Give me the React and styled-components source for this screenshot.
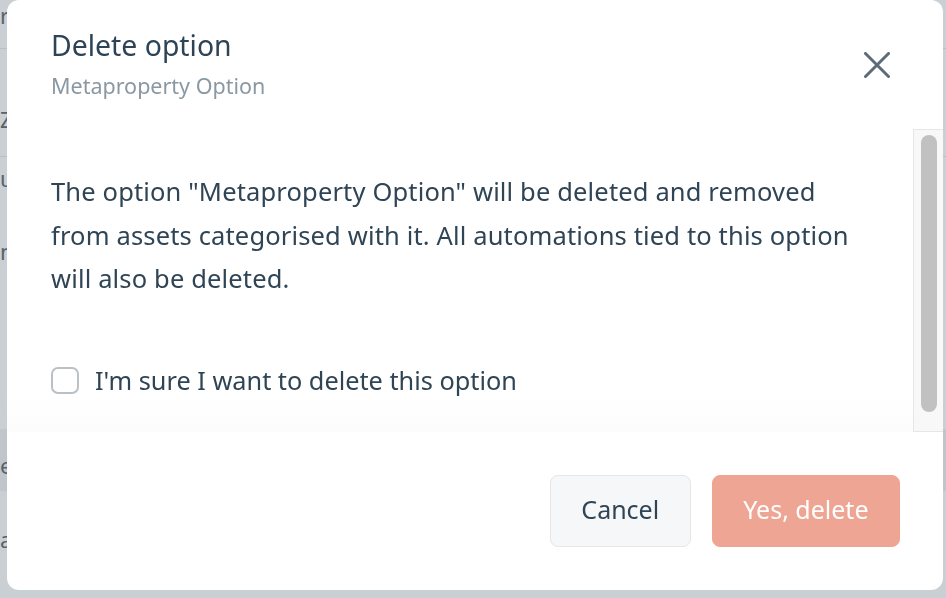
import React, { useState } from "react";
import styled, { createGlobalStyle } from "styled-components";

const GlobalStyle = createGlobalStyle`
  html, body {
    margin: 0;
    padding: 0;
    height: 100%;
    overflow: hidden;
    font-family: "Noto Sans", "Open Sans", sans-serif;
  }
`;

// page content that peeks out from behind the modal on the left
const backdropRows = [
  { text: "r", height: 49, top: 4, lined: true },
  { text: "Z", height: 108, top: 59, lined: true },
  { text: "u", height: 50, top: 10 },
  { text: "n", height: 222, top: 33 },
  { text: "e", height: 62, top: 25, dark: true },
  { text: "a", height: 106, top: 37 },
];

function App() {
  const [sure, setSure] = useState(false);

  return (
    <>
      <GlobalStyle />
      <Backdrop>
        {backdropRows.map((row, idx) => (
          <BackdropRow
            key={idx}
            $height={row.height}
            $top={row.top}
            $dark={row.dark}
            $lined={row.lined}
          >
            {row.text}
          </BackdropRow>
        ))}
      </Backdrop>

      <Dialog role="dialog" aria-labelledby="delete-title">
        <Header>
          <div>
            <Title id="delete-title">Delete option</Title>
            <Subtitle>Metaproperty Option</Subtitle>
          </div>
          <CloseButton aria-label="Close">
            <svg width="26" height="26" viewBox="0 0 26 26" fill="none">
              <path
                d="M1.5 1.5 24.5 24.5M24.5 1.5 1.5 24.5"
                stroke="#5c6b77"
                strokeWidth="3"
                strokeLinecap="round"
              />
            </svg>
          </CloseButton>
        </Header>

        <Body>
          <BodyContent>
            <Message>
              The option "Metaproperty Option" will be deleted and removed from
              assets categorised with it. All automations tied to this option
              will also be deleted.
            </Message>
            <CheckRow>
              <CheckBox
                type="checkbox"
                checked={sure}
                onChange={(e) => setSure(e.target.checked)}
              />
              I'm sure I want to delete this option
            </CheckRow>
          </BodyContent>
          <ScrollTrack>
            <ScrollThumb />
          </ScrollTrack>
        </Body>

        <Footer>
          <Button>Cancel</Button>
          <Button $danger disabled={!sure}>
            Yes, delete
          </Button>
        </Footer>
      </Dialog>
    </>
  );
}

export default App;

const Backdrop = styled.div`
  height: 100vh;
  background: #c9cfd3;
  display: flex;
  flex-direction: column;
  overflow: hidden;
`;

const BackdropRow = styled.div`
  flex: 0 0 ${(p) => p.$height}px;
  box-sizing: border-box;
  padding-top: ${(p) => p.$top}px;
  font-size: 22px;
  line-height: 22px;
  color: #56636d;
  background: ${(p) => (p.$dark ? "#bfc5ca" : "transparent")};
  border-bottom: ${(p) => (p.$lined ? "1px solid #b7bec4" : "none")};
`;

const Dialog = styled.div`
  position: fixed;
  top: 0;
  left: 7px;
  width: 936px;
  height: 590px;
  background: #ffffff;
  border-radius: 12px;
  display: flex;
  flex-direction: column;
  overflow: hidden;
  color: #2f4454;
`;

const Header = styled.div`
  flex: 0 0 129px;
  box-sizing: border-box;
  display: flex;
  justify-content: space-between;
  align-items: flex-start;
  padding: 25px 44px 0 44px;
`;

const Title = styled.h2`
  margin: 0;
  font-size: 28.4px;
  font-weight: 400;
  line-height: 40px;
  color: #2e4456;
`;

const Subtitle = styled.div`
  margin-top: 7px;
  font-size: 21.5px;
  line-height: 28px;
  color: #8a98a3;
`;

const CloseButton = styled.button`
  margin-top: 27px;
  margin-right: 9px;
  padding: 0;
  border: none;
  background: none;
  display: flex;
  cursor: pointer;
`;

const Body = styled.div`
  flex: 0 0 303px;
  display: flex;
  background: linear-gradient(
    to bottom,
    #ffffff 0%,
    #ffffff 88%,
    #fcfcfc 100%
  );
`;

const BodyContent = styled.div`
  flex: 1;
  overflow: hidden;
  padding: 41px 52px 0 44px;
`;

const ScrollTrack = styled.div`
  flex: 0 0 30px;
  box-sizing: border-box;
  display: flex;
  background: #f8f8f8;
  border: 1px solid #e6e6e6;
  border-right: none;
  padding: 5px 6px 19px 7px;
`;

const ScrollThumb = styled.div`
  flex: 1;
  background: #c1c1c1;
  border-radius: 8px;
`;

const Message = styled.p`
  margin: 0;
  font-size: 25.5px;
  letter-spacing: 0.15px;
  line-height: 43.5px;
`;

const CheckRow = styled.label`
  margin-top: 58px;
  display: flex;
  align-items: center;
  gap: 16px;
  font-size: 25.3px;
  line-height: 43px;
  cursor: pointer;
`;

const CheckBox = styled.input`
  appearance: none;
  margin: 0;
  width: 28px;
  height: 27px;
  box-sizing: border-box;
  border: 2px solid #b9c1c7;
  border-radius: 7px;
  background: #ffffff;
  cursor: pointer;

  &:checked {
    background: #2f4454;
    border-color: #2f4454;
  }
`;

const Footer = styled.div`
  flex: 1;
  display: flex;
  justify-content: flex-end;
  align-items: flex-start;
  gap: 21px;
  padding: 43px 43px 0 0;
`;

const Button = styled.button`
  height: 72px;
  box-sizing: border-box;
  padding: 0 30.5px 5px;
  border-radius: 8px;
  font-family: inherit;
  font-size: 25px;
  cursor: pointer;
  border: 1px solid ${(p) => (p.$danger ? "#eea593" : "#e3e7ea")};
  background: ${(p) => (p.$danger ? "#eea593" : "#f5f7f9")};
  color: ${(p) => (p.$danger ? "#ffffff" : "#2f4454")};

  &:disabled {
    cursor: default;
  }
`;
